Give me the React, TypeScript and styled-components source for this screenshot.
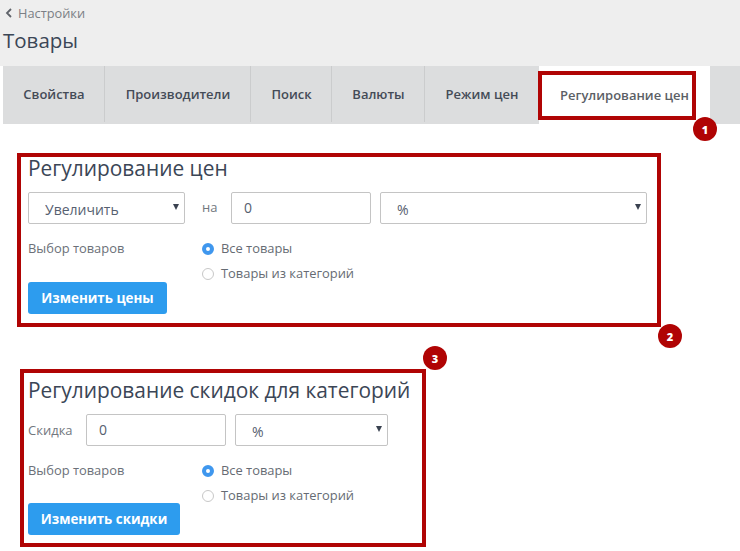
import React from "react";
import styled, { createGlobalStyle } from "styled-components";

const Global = createGlobalStyle`
  html, body { margin: 0; padding: 0; background: #fff; }
  body { font-family: "Open Sans", "Noto Sans", sans-serif; color: #4b5563; overflow: hidden; }
  * { box-sizing: border-box; }
`;

const Page = styled.div`
  width: 740px;
  height: 551px;
  overflow: hidden;
  background: #fff;
`;

const Header = styled.header`
  height: 66px;
  background: #eee;
  padding: 4px 3px 0;
`;

const Back = styled.div`
  display: flex;
  align-items: center;
  gap: 5px;
  height: 18px;
  padding-left: 2px;
  font-size: 12.8px;
  color: #7b7f85;
`;

const PageTitle = styled.h1`
  margin: 5px 0 0;
  font-size: 20.5px;
  line-height: 26px;
  font-weight: 400;
  color: #3b4656;
`;

const Tabs = styled.nav`
  display: flex;
  height: 58px;
  margin-left: 3px;
  background: #dcddde;
`;

const Tab = styled.div<{ $w: number; $active?: boolean }>`
  position: relative;
  width: ${(p) => p.$w}px;
  flex: none;
  display: flex;
  align-items: center;
  justify-content: center;
  font-size: 13px;
  font-weight: 600;
  padding-bottom: ${(p) => (p.$active ? 0 : 2)}px;
  color: ${(p) => (p.$active ? "#5b5f66" : "#444b57")};
  background: ${(p) => (p.$active ? "#fff" : "transparent")};
  ${(p) => !p.$active && "&::after { content: ''; position: absolute; right: 0; top: 0; bottom: 2px; width: 1px; background: #cbcccd; }"}
`;

const LastPlainTab = styled(Tab)`
  &::after { display: none; }
`;

const TabMark = styled.span`
  position: absolute;
  left: -1px;
  top: 5px;
  width: 158px;
  height: 49px;
  border: 4px solid #b00404;
`;

const Badge = styled.span`
  position: absolute;
  width: 24px;
  height: 24px;
  border-radius: 50%;
  background: #b00404;
  color: #fff;
  font-size: 11px;
  font-weight: 800;
  display: flex;
  align-items: center;
  justify-content: center;
  z-index: 2;
`;

const TabBadge = styled(Badge)`
  right: -25px;
  bottom: -25px;
`;

const Section = styled.section<{ $w: number; $h: number; $ml: number; $mt: number }>`
  position: relative;
  width: ${(p) => p.$w}px;
  height: ${(p) => p.$h}px;
  margin: ${(p) => p.$mt}px 0 0 ${(p) => p.$ml}px;
  border: 4px solid #b00404;
  padding-left: ${(p) => 24 - p.$ml}px;
`;

const SectionTitle = styled.h2<{ $top: number }>`
  margin: ${(p) => p.$top}px 0 0;
  font-size: 20.9px;
  line-height: 26px;
  font-weight: 400;
  color: #3b4656;
  white-space: nowrap;
`;

const FieldRow = styled.div<{ $top: number; $gap: number }>`
  display: flex;
  align-items: center;
  gap: ${(p) => p.$gap}px;
  margin-top: ${(p) => p.$top}px;
  height: 32px;
`;

const SelectWrap = styled.div<{ $w: number }>`
  position: relative;
  width: ${(p) => p.$w}px;
  height: 32px;
  flex: none;
  &::after {
    content: "";
    position: absolute;
    right: 6px;
    top: 12px;
    border-left: 3.5px solid transparent;
    border-right: 3.5px solid transparent;
    border-top: 6px solid #3a4250;
    pointer-events: none;
  }
`;

const Select = styled.select`
  appearance: none;
  width: 100%;
  height: 100%;
  border: 1px solid #c4c4c4;
  border-radius: 2px;
  background: #fff;
  padding: 2px 0 0 16px;
  font: 14px "Open Sans", sans-serif;
  color: #566070;
  outline: none;
`;

const Input = styled.input<{ $w: number }>`
  width: ${(p) => p.$w}px;
  height: 32px;
  flex: none;
  border: 1px solid #c4c4c4;
  border-radius: 2px;
  background: #fff;
  padding: 0 0 1px 12px;
  font: 14px "Open Sans", sans-serif;
  color: #566070;
  outline: none;
`;

const FieldLabel = styled.span<{ $w: number; $pl?: number; $pb?: number }>`
  width: ${(p) => p.$w}px;
  padding: 0 0 ${(p) => p.$pb ?? 0}px ${(p) => p.$pl ?? 0}px;
  flex: none;
  font-size: 13px;
  color: #72777e;
`;

const ChoiceGrid = styled.div<{ $top: number }>`
  display: grid;
  grid-template-columns: 174px 1fr;
  margin-top: ${(p) => p.$top}px;
`;

const ChoiceLabel = styled.div`
  margin-top: -1px;
  font-size: 12.9px;
  line-height: 18px;
  color: #6b7078;
`;

const Choices = styled.div`
  display: flex;
  flex-direction: column;
  gap: 7px;
`;

const Choice = styled.div`
  display: flex;
  align-items: center;
  gap: 7px;
  height: 18px;
  padding-bottom: 2px;
  font-size: 12.9px;
  color: #666b73;
`;

const Radio = styled.span<{ $on?: boolean }>`
  width: 12px;
  height: 12px;
  flex: none;
  margin-top: 2px;
  border-radius: 50%;
  background: #fff;
  border: ${(p) => (p.$on ? "4px solid #3f97ee" : "1px solid #c8c8c8")};
`;

const Button = styled.button<{ $w: number; $top: number }>`
  display: block;
  width: ${(p) => p.$w}px;
  height: 32px;
  margin-top: ${(p) => p.$top}px;
  border: 0;
  border-radius: 3px;
  background: #2d9cee;
  color: #fff;
  font: 700 13.35px "Open Sans", sans-serif;
  padding: 0 0 1px;
`;

const Section1Badge = styled(Badge)`
  right: -25px;
  bottom: -25px;
`;

const Section2Badge = styled(Badge)`
  right: -25px;
  top: -27px;
`;

const RowSpacer = styled.span`
  width: 9px;
  flex: none;
`;

const Chevron = () => (
  <svg width="8" height="10" viewBox="0 0 8 10" fill="none">
    <path d="M6 1 2 5l4 4" stroke="#5f636a" strokeWidth="1.8" />
  </svg>
);

const ProductChoice = ({ top, btn, btnW, btnTop }: { top: number; btn: string; btnW: number; btnTop: number }) => (
  <>
    <ChoiceGrid $top={top}>
      <ChoiceLabel>Выбор товаров</ChoiceLabel>
      <Choices>
        <Choice><Radio $on />Все товары</Choice>
        <Choice><Radio />Товары из категорий</Choice>
      </Choices>
    </ChoiceGrid>
    <Button $w={btnW} $top={btnTop}>{btn}</Button>
  </>
);

export default function App() {
  return (
    <Page>
      <Global />
      <Header>
        <Back><Chevron />Настройки</Back>
        <PageTitle>Товары</PageTitle>
      </Header>
      <Tabs>
        <Tab $w={102}>Свойства</Tab>
        <Tab $w={146}>Производители</Tab>
        <Tab $w={81}>Поиск</Tab>
        <Tab $w={93}>Валюты</Tab>
        <LastPlainTab $w={114}>Режим цен</LastPlainTab>
        <Tab $w={171} $active>
          Регулирование цен
          <TabMark><TabBadge>1</TabBadge></TabMark>
        </Tab>
      </Tabs>
      <Section $w={644} $h={174} $ml={17} $mt={29}>
        <SectionTitle $top={-2}>Регулирование цен</SectionTitle>
        <FieldRow $top={11} $gap={0}>
          <SelectWrap $w={157}>
            <Select defaultValue="u"><option value="u">Увеличить</option></Select>
          </SelectWrap>
          <FieldLabel $w={46} $pl={17} $pb={2}>на</FieldLabel>
          <Input $w={140} defaultValue="0" />
          <RowSpacer />
          <SelectWrap $w={267}>
            <Select defaultValue="p"><option value="p">%</option></Select>
          </SelectWrap>
        </FieldRow>
        <ProductChoice top={16} btn="Изменить цены" btnW={139} btnTop={-1} />
        <Section1Badge>2</Section1Badge>
      </Section>
      <Section $w={406} $h={178} $ml={20} $mt={42}>
        <Section2Badge>3</Section2Badge>
        <SectionTitle $top={4}>Регулирование скидок для категорий</SectionTitle>
        <FieldRow $top={11} $gap={9}>
          <FieldLabel $w={49}>Скидка</FieldLabel>
          <Input $w={140} defaultValue="0" />
          <SelectWrap $w={153}>
            <Select defaultValue="p"><option value="p">%</option></Select>
          </SelectWrap>
        </FieldRow>
        <ProductChoice top={16} btn="Изменить скидки" btnW={152} btnTop={-2} />
      </Section>
    </Page>
  );
}
